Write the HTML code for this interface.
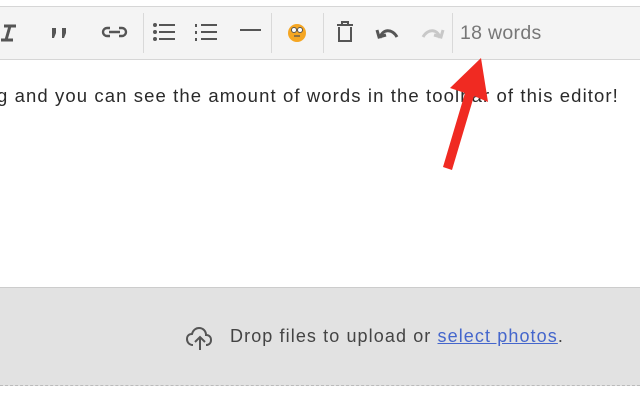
<!DOCTYPE html>
<html><head><style>
body{margin:0;width:640px;height:400px;background:#fff;position:relative;overflow:hidden;font-family:"Liberation Sans",sans-serif}
.tb{position:absolute;left:0;top:6px;width:640px;height:52px;background:#f4f4f4;border-top:1px solid #d6d6d6;border-bottom:1px solid #d6d6d6}
.txt{position:absolute;left:-3px;top:85px;font-size:18.5px;letter-spacing:1.1px;color:#2a2a2a;white-space:nowrap}
.wc{position:absolute;left:460px;top:22px;font-size:19.5px;letter-spacing:0.3px;color:#777}
.drop{position:absolute;left:0;top:287px;width:640px;height:97px;background:#e2e2e2;border-top:1px solid #ccc;border-bottom:1px dashed #bbb}
.dt{position:absolute;left:230px;top:38px;font-size:18px;letter-spacing:1.1px;color:#444;white-space:nowrap}
.dt a{color:#4466cc;text-decoration:underline}
</style></head><body>
<div class="tb"></div>
<svg width="640" height="70" style="position:absolute;left:0;top:0" fill="none" stroke="#555" stroke-width="2.4">
<path d="M4 26 H16 M10 26 L6 40 M1 40 H13" stroke-width="3"/>
<g fill="#555" stroke="none"><rect x="52" y="28" width="4" height="5"/><rect x="62" y="28" width="4" height="5"/><path d="M52 33h4l-2 5h-2z M62 33h4l-2 5h-2z"/></g>
<path d="M110 28h-3a4 4 0 0 0 0 8h3 M119 28h3a4 4 0 0 1 0 8h-3 M109 32h11"/>
<line x1="143.5" y1="13" x2="143.5" y2="53" stroke="#d9d9d9" stroke-width="1"/>
<g stroke-width="2"><path d="M159 25h16M159 32h16M159 39h16"/><circle cx="155" cy="25" r="1" fill="#555"/><circle cx="155" cy="32" r="1" fill="#555"/><circle cx="155" cy="39" r="1" fill="#555"/>
<path d="M201 25h16M201 32h16M201 39h16 M196 24v3 M196 31v3 M196 38v3" /></g>
<path d="M240 30h21" stroke-width="2"/>
<line x1="271.5" y1="13" x2="271.5" y2="53" stroke="#d9d9d9" stroke-width="1"/>
<circle cx="297" cy="33" r="9" fill="#f5a623" stroke="none"/><circle cx="294" cy="30" r="2.5" fill="#fff" stroke="#555" stroke-width="1"/><circle cx="300" cy="30" r="2.5" fill="#fff" stroke="#555" stroke-width="1"/><path d="M294 36h6" stroke-width="1.3"/>
<line x1="323.5" y1="13" x2="323.5" y2="53" stroke="#d9d9d9" stroke-width="1"/>
<path d="M337 25h16 M342 24v-2h6v2 M339 27v14h12v-14" stroke-width="2"/>
<path d="M380 38c2-9 12-10 17 -1 M377 30l2 7 7-2" stroke-width="3"/>
<path d="M440 38c-2-9-12-10-17-1 M443 30l-2 7-7-2" stroke="#c8c8c8" stroke-width="3"/>
<line x1="452.5" y1="13" x2="452.5" y2="53" stroke="#d9d9d9" stroke-width="1"/>
</svg>
<div class="wc">18 words</div>
<div class="txt">g and you can see the amount of words in the toolbar of this editor!</div>
<svg width="640" height="400" style="position:absolute;left:0;top:0">
<polygon points="481,58 450,88 465,93 443,167 452,170 474,96 488,102" fill="#f02a22"/>
</svg>
<div class="drop">
<svg width="30" height="30" style="position:absolute;left:185px;top:36px" fill="none" stroke="#555" stroke-width="2">
<path d="M8 21c-4 0-6-3-6-6s2-5 5-5c1-4 4-6 7-6 4 0 7 3 7 7 3 0 5 2 5 5s-2 5-5 5"/><path d="M15 26V14M10 18l5-5 5 5"/>
</svg>
<div class="dt">Drop files to upload or <a>select photos</a>.</div>
</div>
</body></html>
